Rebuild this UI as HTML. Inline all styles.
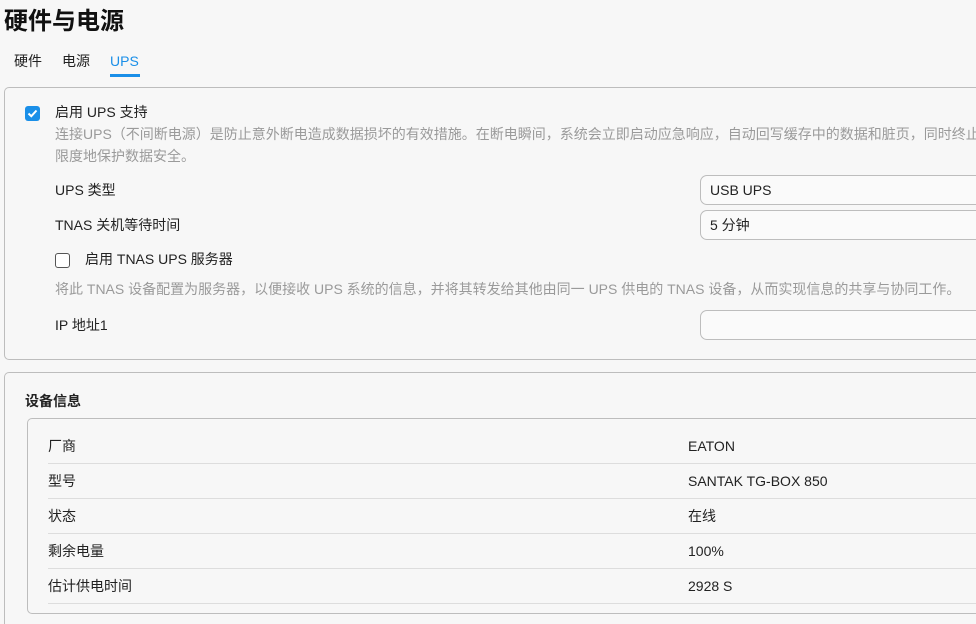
<!DOCTYPE html>
<html><head><meta charset="utf-8"><style>
*{box-sizing:border-box;margin:0;padding:0}
html,body{width:976px;height:624px;overflow:hidden}
body{background:#f7f7f7;font-family:"Liberation Sans","Noto Sans CJK SC",sans-serif;color:#222;position:relative;line-height:1.2}
.a{position:absolute;white-space:nowrap}
h1{position:absolute;left:4px;top:6px;font-size:24px;font-weight:bold;color:#111;line-height:32px}
.tab{font-size:14px;top:53px}
.panel{position:absolute;left:4px;width:972px;border:1px solid #bdbdbd;border-right:none;border-radius:5px 0 0 5px;background:#f7f7f7}
.desc{font-size:14px;color:#9a9a9a}
.lbl{font-size:14px;color:#222}
.inp{position:absolute;left:700px;width:276px;height:30px;border:1px solid #bdbdbd;border-right:none;border-radius:7px 0 0 7px;background:#fafafa;font-size:14px;padding:6px 9px}
.row{position:absolute;left:48px;width:928px;height:35px;border-bottom:1px solid #ddd;font-size:14px}
.row span{position:absolute;top:9px}
</style></head><body>
<h1>硬件与电源</h1>
<div class="a tab" style="left:14px">硬件</div>
<div class="a tab" style="left:62px">电源</div>
<div class="a tab" style="left:110px;color:#1a8fe8">UPS</div>
<div class="a" style="left:110px;top:74px;width:30px;height:3px;background:#1a8fe8"></div>

<div class="panel" style="top:87px;height:273px"></div>
<div class="a" style="left:25px;top:106px;width:15px;height:15px;background:#1a8fe8;border-radius:3px"><svg width="15" height="15" viewBox="0 0 15 15"><path d="M3.5 7.5 L6.3 10.2 L11.5 4.5" stroke="#fff" stroke-width="2" fill="none"/></svg></div>
<div class="a lbl" style="left:55px;top:104px">启用 UPS 支持</div>
<div class="a desc" style="left:55px;top:126px">连接UPS（不间断电源）是防止意外断电造成数据损坏的有效措施。在断电瞬间，系统会立即启动应急响应，自动回写缓存中的数据和脏页，同时终止</div>
<div class="a desc" style="left:55px;top:148px">限度地保护数据安全。</div>
<div class="a lbl" style="left:55px;top:182px">UPS 类型</div>
<div class="inp" style="top:175px">USB UPS</div>
<div class="a lbl" style="left:55px;top:217px">TNAS 关机等待时间</div>
<div class="inp" style="top:210px">5 分钟</div>
<div class="a" style="left:55px;top:253px;width:15px;height:15px;border:1px solid #555;border-radius:3px;background:#fff"></div>
<div class="a lbl" style="left:85px;top:251px">启用 TNAS UPS 服务器</div>
<div class="a desc" style="left:55px;top:281px">将此 TNAS 设备配置为服务器，以便接收 UPS 系统的信息，并将其转发给其他由同一 UPS 供电的 TNAS 设备，从而实现信息的共享与协同工作。</div>
<div class="a lbl" style="left:55px;top:317px">IP 地址1</div>
<div class="inp" style="top:310px"></div>

<div class="panel" style="top:372px;height:252px;border-bottom:none;border-radius:5px 0 0 0"></div>
<div class="a" style="left:25px;top:393px;font-size:14px;font-weight:bold">设备信息</div>
<div class="a" style="left:27px;top:418px;width:949px;height:196px;border:1px solid #bdbdbd;border-right:none;border-radius:5px 0 0 5px"></div>
<div class="row" style="top:429px"><span style="left:0">厂商</span><span style="left:640px">EATON</span></div>
<div class="row" style="top:464px"><span style="left:0">型号</span><span style="left:640px">SANTAK TG-BOX 850</span></div>
<div class="row" style="top:499px"><span style="left:0">状态</span><span style="left:640px">在线</span></div>
<div class="row" style="top:534px"><span style="left:0">剩余电量</span><span style="left:640px">100%</span></div>
<div class="row" style="top:569px"><span style="left:0">估计供电时间</span><span style="left:640px">2928 S</span></div>
</body></html>
